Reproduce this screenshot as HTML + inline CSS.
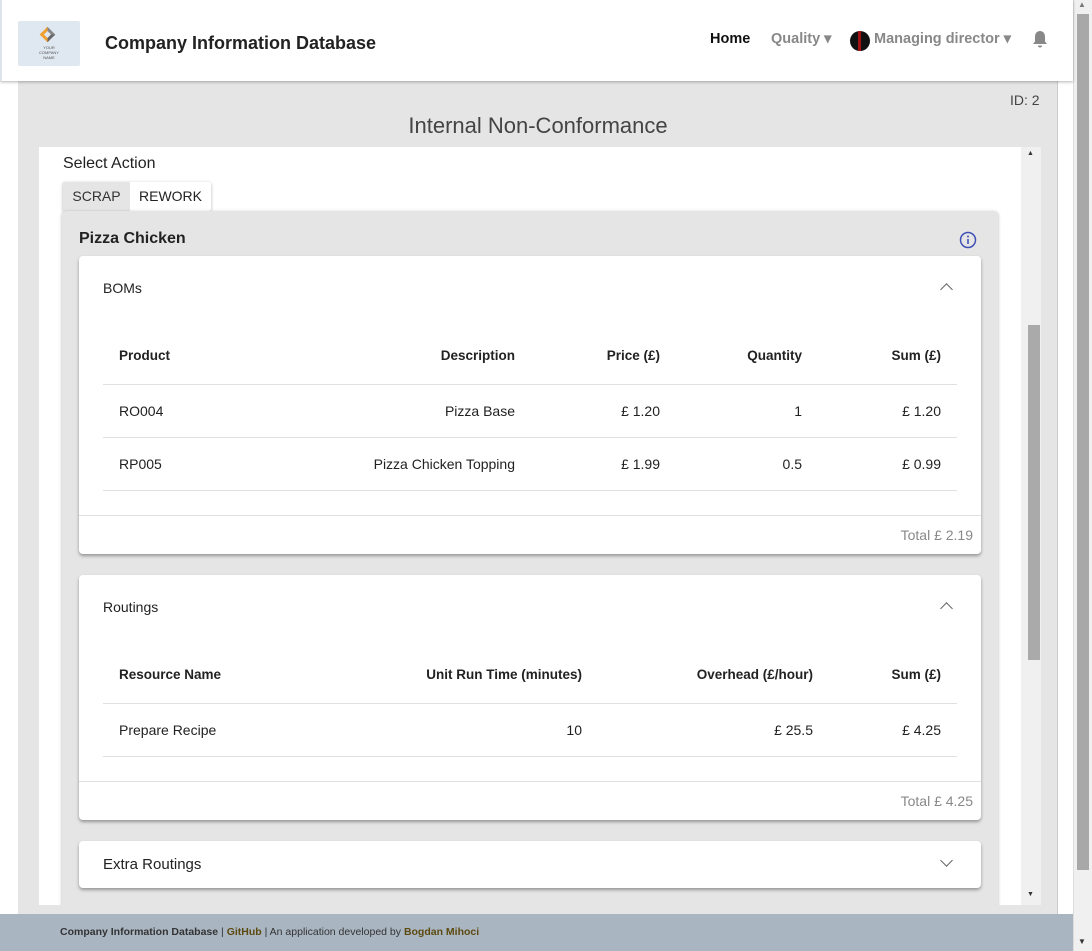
<!DOCTYPE html>
<html><head><meta charset="utf-8"><style>
*{box-sizing:border-box;margin:0;padding:0}
body{width:1092px;height:951px;position:relative;overflow:hidden;background:#fff;font-family:"Liberation Sans",sans-serif;color:#212121}
.abs{position:absolute}
.hdr{left:0;top:0;width:1073px;height:81px;background:#fff;box-shadow:0 1px 3px rgba(0,0,0,.3);z-index:2;border-left:2px solid #dde3ea}
.gray{left:18px;top:81px;width:1040px;height:833px;background:#e5e5e5;border-right:1px solid #ccc}
.panel{left:39px;top:147px;width:982px;height:758px;background:#fff;overflow:hidden}
.card{background:#fff;border-radius:4px;box-shadow:0 2px 3px rgba(0,0,0,.35);position:absolute;left:40px;width:902px}
.th{font-weight:bold;font-size:13.5px;color:#222}
.td{font-size:14px;color:#222}
.row{position:absolute;left:24px;width:854px;border-bottom:1px solid #e0e0e0}
.r{position:absolute;text-align:right}
.l{position:absolute}
.chev{position:absolute;right:30px;width:9px;height:9px;border-left:1.5px solid #666;border-top:1.5px solid #666}
</style></head><body>
<div class="abs hdr">
  <div class="abs" style="left:16px;top:21px;width:62px;height:45px;background:#dfe7f0;border-radius:2px">
    <div class="abs" style="left:24px;top:8px;width:11px;height:11px;border:3px solid #f0a030;border-right-color:#666;border-top-color:#888;transform:rotate(45deg)"></div>
    <div class="abs" style="left:0;top:24px;width:62px;text-align:center;font-size:4px;color:#555;line-height:5px">YOUR<br>COMPANY<br>NAME</div>
  </div>
  <div class="abs" style="left:103px;top:33px;font-size:18px;font-weight:bold;color:#222">Company Information Database</div>
  <div class="abs" style="left:708px;top:31px;font-size:14.5px;font-weight:bold;color:#111">Home</div>
  <div class="abs" style="left:769px;top:31px;font-size:14.5px;font-weight:bold;color:#888">Quality ▾</div>
  <div class="abs" style="left:848px;top:31px;width:20px;height:20px;border-radius:50%;background:#111;overflow:hidden"><div class="abs" style="left:8px;top:0;width:3px;height:20px;background:#a01010"></div></div>
  <div class="abs" style="left:872px;top:31px;font-size:14.5px;font-weight:bold;color:#888">Managing director ▾</div>
  <svg class="abs" style="left:1030px;top:30px" width="16" height="18" viewBox="0 0 16 18"><path d="M8 1c-3 0-5 2.5-5 5.5v5L1 14h14l-2-2.5v-5C13 3.5 11 1 8 1zM6 15.5a2 2 0 004 0z" fill="#888"/></svg>
</div>
<div class="abs gray"></div>
<div class="abs" style="left:1010px;top:92px;font-size:14px;color:#444">ID: 2</div>
<div class="abs" style="left:18px;top:113px;width:1040px;text-align:center;font-size:22px;color:#444">Internal Non-Conformance</div>
<div class="abs panel">
  <div class="abs" style="left:24px;top:8px;font-size:16px;color:#222">Select Action</div>
  <div class="abs" style="left:24px;top:35px;width:148px;height:29px;background:#fff;box-shadow:0 1px 3px rgba(0,0,0,.3);border-radius:2px">
    <div class="abs" style="left:0;top:0;width:67px;height:29px;background:#e5e5e5;text-align:center;line-height:29px;font-size:14px;color:#333">SCRAP</div>
    <div class="abs" style="left:67px;top:0;width:81px;text-align:center;line-height:29px;font-size:14px;color:#222">REWORK</div>
  </div>
  <div class="abs" style="left:23px;top:64px;width:936px;height:720px;background:#e5e5e5;box-shadow:0 1px 3px rgba(0,0,0,.3);border-radius:4px">
    <div class="abs" style="left:17px;top:19px;font-size:16px;font-weight:bold;color:#222">Pizza Chicken</div>
    <svg class="abs" style="left:897px;top:20px" width="18" height="18" viewBox="0 0 18 18"><circle cx="9" cy="9" r="7.5" fill="none" stroke="#3f51b5" stroke-width="1.5"/><rect x="8.2" y="8" width="1.6" height="5" fill="#3f51b5"/><circle cx="9" cy="5.5" r="1" fill="#3f51b5"/></svg>
    <div class="card" style="left:17px;top:45px;height:298px">
      <div class="l td" style="left:24px;top:24px">BOMs</div>
      <div class="chev" style="top:29px;transform:rotate(45deg)"></div>
      <div class="row" style="top:75px;height:54px"><span class="l th" style="left:16px;top:17px">Product</span><span class="r th" style="right:442px;top:17px">Description</span><span class="r th" style="right:297px;top:17px">Price (£)</span><span class="r th" style="right:155px;top:17px">Quantity</span><span class="r th" style="right:16px;top:17px">Sum (£)</span></div>
      <div class="row" style="top:129px;height:53px"><span class="l td" style="left:16px;top:18px">RO004</span><span class="r td" style="right:442px;top:18px">Pizza Base</span><span class="r td" style="right:297px;top:18px">£ 1.20</span><span class="r td" style="right:155px;top:18px">1</span><span class="r td" style="right:16px;top:18px">£ 1.20</span></div>
      <div class="row" style="top:182px;height:53px"><span class="l td" style="left:16px;top:18px">RP005</span><span class="r td" style="right:442px;top:18px">Pizza Chicken Topping</span><span class="r td" style="right:297px;top:18px">£ 1.99</span><span class="r td" style="right:155px;top:18px">0.5</span><span class="r td" style="right:16px;top:18px">£ 0.99</span></div>
      <div class="abs" style="left:0;top:259px;width:902px;border-top:1px solid #e0e0e0"></div>
      <div class="r" style="right:8px;top:271px;font-size:14px;color:#888">Total £ 2.19</div>
    </div>
    <div class="card" style="left:17px;top:364px;height:245px">
      <div class="l td" style="left:24px;top:24px">Routings</div>
      <div class="chev" style="top:29px;transform:rotate(45deg)"></div>
      <div class="row" style="top:75px;height:54px"><span class="l th" style="left:16px;top:17px">Resource Name</span><span class="r th" style="right:375px;top:17px">Unit Run Time (minutes)</span><span class="r th" style="right:144px;top:17px">Overhead (£/hour)</span><span class="r th" style="right:16px;top:17px">Sum (£)</span></div>
      <div class="row" style="top:129px;height:53px"><span class="l td" style="left:16px;top:18px">Prepare Recipe</span><span class="r td" style="right:375px;top:18px">10</span><span class="r td" style="right:144px;top:18px">£ 25.5</span><span class="r td" style="right:16px;top:18px">£ 4.25</span></div>
      <div class="abs" style="left:0;top:206px;width:902px;border-top:1px solid #e0e0e0"></div>
      <div class="r" style="right:8px;top:218px;font-size:14px;color:#888">Total £ 4.25</div>
    </div>
    <div class="card" style="left:17px;top:630px;height:47px">
      <div class="l td" style="left:24px;top:15px;font-size:15px">Extra Routings</div>
      <div class="chev" style="top:15px;transform:rotate(225deg)"></div>
    </div>
  </div>
</div>
<div class="abs" style="left:1021px;top:147px;width:20px;height:758px;background:#f0f0f0">
  <div class="abs" style="left:7px;top:178px;width:12px;height:335px;background:#aaa"></div>
  <div class="abs" style="left:6px;top:3px;font-size:7px;color:#333">▲</div>
  <div class="abs" style="left:6px;top:744px;font-size:7px;color:#333">▼</div>
</div>
<div class="abs" style="left:0;top:914px;width:1073px;height:37px;background:#aab5c2;font-size:10.5px;color:#333;padding:12px 0 0 60px"><b>Company Information Database</b> | <b style="color:#5c4a10">GitHub</b> | An application developed by <b style="color:#5c4a10">Bogdan Mihoci</b></div>
<div class="abs" style="left:1073px;top:0;width:19px;height:951px;background:#f0f0f0;border-left:1px solid #ddd">
  <div class="abs" style="left:3px;top:14px;width:12px;height:856px;background:#a8a8a8"></div>
  <div class="abs" style="left:4px;top:0;font-size:8px;color:#777">▲</div>
  <div class="abs" style="left:4px;top:937px;font-size:8px;color:#333">▼</div>
</div>
</body></html>
